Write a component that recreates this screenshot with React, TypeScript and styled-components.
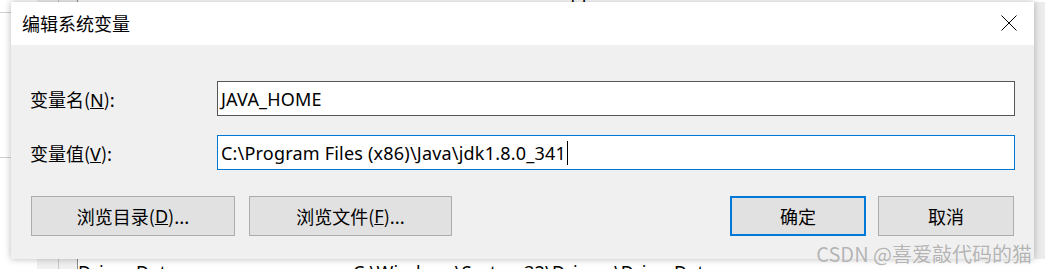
import React from 'react';
import styled, { createGlobalStyle } from 'styled-components';

const GlobalStyle = createGlobalStyle`
  html, body {
    margin: 0;
    padding: 0;
  }
  body {
    width: 1045px;
    height: 269px;
    overflow: hidden;
    background: #ffffff;
    font-family: "Noto Sans", "Noto Sans CJK SC", sans-serif;
    color: #000;
  }
`;

const Screen = styled.div`
  position: relative;
  width: 1045px;
  height: 269px;
  overflow: hidden;
  display: grid;
  grid-template-columns: 11px 1023px 11px;
  grid-template-rows: 2px 257px 10px;
  background: #ffffff;
`;

const Strip = styled.div<{ $row: number }>`
  position: relative;
  grid-column: 1 / 4;
  grid-row: ${p => p.$row};
  height: 100%;
  min-height: 0;
  display: flex;
  align-items: flex-start;
  overflow: hidden;
  background: #fff;
`;

const BackCell = styled.div<{ $w: number; $bg?: string; $line?: string }>`
  flex: none;
  width: ${p => p.$w}px;
  height: 100%;
  background: ${p => p.$bg || 'transparent'};
  border-right: ${p => (p.$line ? `1px solid ${p.$line}` : 'none')};
  box-sizing: border-box;
`;

const BackText = styled.div<{ $w: number; $shift: number }>`
  flex: none;
  width: ${p => p.$w}px;
  font-size: 18px;
  line-height: 18px;
  letter-spacing: 0.2px;
  white-space: nowrap;
  margin-top: ${p => p.$shift}px;
`;

const SideStrip = styled.div<{ $bg: string }>`
  grid-row: 2;
  background: ${p => p.$bg};
  display: flex;
  flex-direction: column;
`;

const SideLine = styled.div<{ $top: number }>`
  margin-top: ${p => p.$top}px;
  height: 1px;
  background: #d0d0d0;
`;

const Dialog = styled.div`
  position: relative;
  z-index: 1;
  grid-column: 2;
  grid-row: 2;
  display: flex;
  flex-direction: column;
  background: #f0f0f0;
  box-shadow: 0 0 7px rgba(0, 0, 0, 0.28);
`;

const TitleBar = styled.div`
  height: 43px;
  box-sizing: border-box;
  flex: none;
  background: #ffffff;
  display: flex;
  align-items: center;
  justify-content: space-between;
  padding: 0 17px 2px 11px;
`;

const Title = styled.div`
  font-size: 18px;
  line-height: 24px;
  font-family: "Noto Sans CJK SC", sans-serif;
`;

const CloseButton = styled.div`
  width: 16px;
  height: 16px;
  display: flex;
  margin-top: 1px;
`;

const Form = styled.div`
  display: grid;
  grid-template-columns: 187px 1fr;
  row-gap: 19px;
  align-items: center;
  padding: 36px 19px 0 19px;
`;

const Label = styled.div`
  font-size: 18px;
  line-height: 24px;
  font-family: "Noto Sans CJK SC", sans-serif;
  padding-top: 1px;
`;

const Latin = styled.span`
  font-family: "Noto Sans", sans-serif;
`;

const Field = styled.div<{ $focused?: boolean }>`
  height: 35px;
  box-sizing: border-box;
  background: #ffffff;
  border: 1px solid ${p => (p.$focused ? '#0078d7' : '#555555')};
  display: flex;
  align-items: center;
  padding: 0 0 0 3px;
  font-size: 18px;
  letter-spacing: 0.2px;
  white-space: nowrap;
`;

const Caret = styled.span`
  display: inline-block;
  width: 1px;
  height: 24px;
  background: #000;
  margin-left: 1px;
`;

const ButtonRow = styled.div`
  display: flex;
  align-items: center;
  gap: 14px;
  padding: 26px 20px 0 20px;
`;

const Spacer = styled.div`
  flex: 1;
`;

const Button = styled.div<{ $w: number; $primary?: boolean }>`
  width: ${p => p.$w}px;
  height: 40px;
  box-sizing: border-box;
  background: #e1e1e1;
  border: ${p => (p.$primary ? '2px solid #0078d7' : '1px solid #adadad')};
  display: flex;
  align-items: center;
  justify-content: center;
  font-size: 18px;
  font-family: "Noto Sans CJK SC", sans-serif;
`;

const RightGroup = styled.div`
  display: flex;
  gap: 12px;
`;

const Watermark = styled.div`
  position: absolute;
  z-index: 2;
  right: 13px;
  top: 241px;
  font-size: 20px;
  line-height: 26px;
  color: rgba(150, 150, 150, 0.7);
  font-family: "Noto Sans CJK SC", sans-serif;
  text-shadow: 0 0 1px rgba(255, 255, 255, 0.6);
  white-space: nowrap;
`;

function App () {
  return (
    <Screen>
      <GlobalStyle />
      <Strip $row={1}>
        <BackCell $w={37} />
        <BackCell $w={22} $bg="#f0f0f0" $line="#c8c8c8" />
        <BackCell $w={19} $bg="#f0f0f0" $line="#8a8a8a" />
        <BackText $w={275} $shift={-16}>Path</BackText>
        <BackText $w={600} $shift={-16}>C:\Users\Administrator\AppData\Local\Micro</BackText>
      </Strip>

      <SideStrip $bg="#ffffff">
        <SideLine $top={10} />
        <SideLine $top={144} />
      </SideStrip>

      <Dialog>
        <TitleBar>
          <Title>编辑系统变量</Title>
          <CloseButton>
            <svg width="16" height="16" viewBox="0 0 16 16">
              <path d="M0.5 0.5 L15.5 15.5 M15.5 0.5 L0.5 15.5" stroke="#000" strokeWidth="1" fill="none" />
            </svg>
          </CloseButton>
        </TitleBar>

        <Form>
          <Label>变量名(<Latin><u>N</u></Latin>):</Label>
          <Field>JAVA_HOME</Field>
          <Label>变量值(<Latin><u>V</u></Latin>):</Label>
          <Field $focused>
            C:\Program Files (x86)\Java\jdk1.8.0_341
            <Caret />
          </Field>
        </Form>

        <ButtonRow>
          <Button $w={204}>浏览目录(<Latin><u>D</u></Latin>)...</Button>
          <Button $w={203}>浏览文件(<Latin><u>F</u></Latin>)...</Button>
          <Spacer />
          <RightGroup>
            <Button $w={136} $primary>确定</Button>
            <Button $w={136}>取消</Button>
          </RightGroup>
        </ButtonRow>
      </Dialog>

      <SideStrip $bg="#ececec" />

      <Strip $row={3}>
        <BackCell $w={37} />
        <BackCell $w={22} $bg="#f0f0f0" $line="#c8c8c8" />
        <BackCell $w={19} $bg="#f0f0f0" $line="#8a8a8a" />
        <BackText $w={275} $shift={4}>Driver Data</BackText>
        <BackText $w={600} $shift={4}>C:\Windows\System32\Drivers\DriverData</BackText>
      </Strip>

      <Watermark>CSDN @喜爱敲代码的猫</Watermark>
    </Screen>
  );
}

export default App;
